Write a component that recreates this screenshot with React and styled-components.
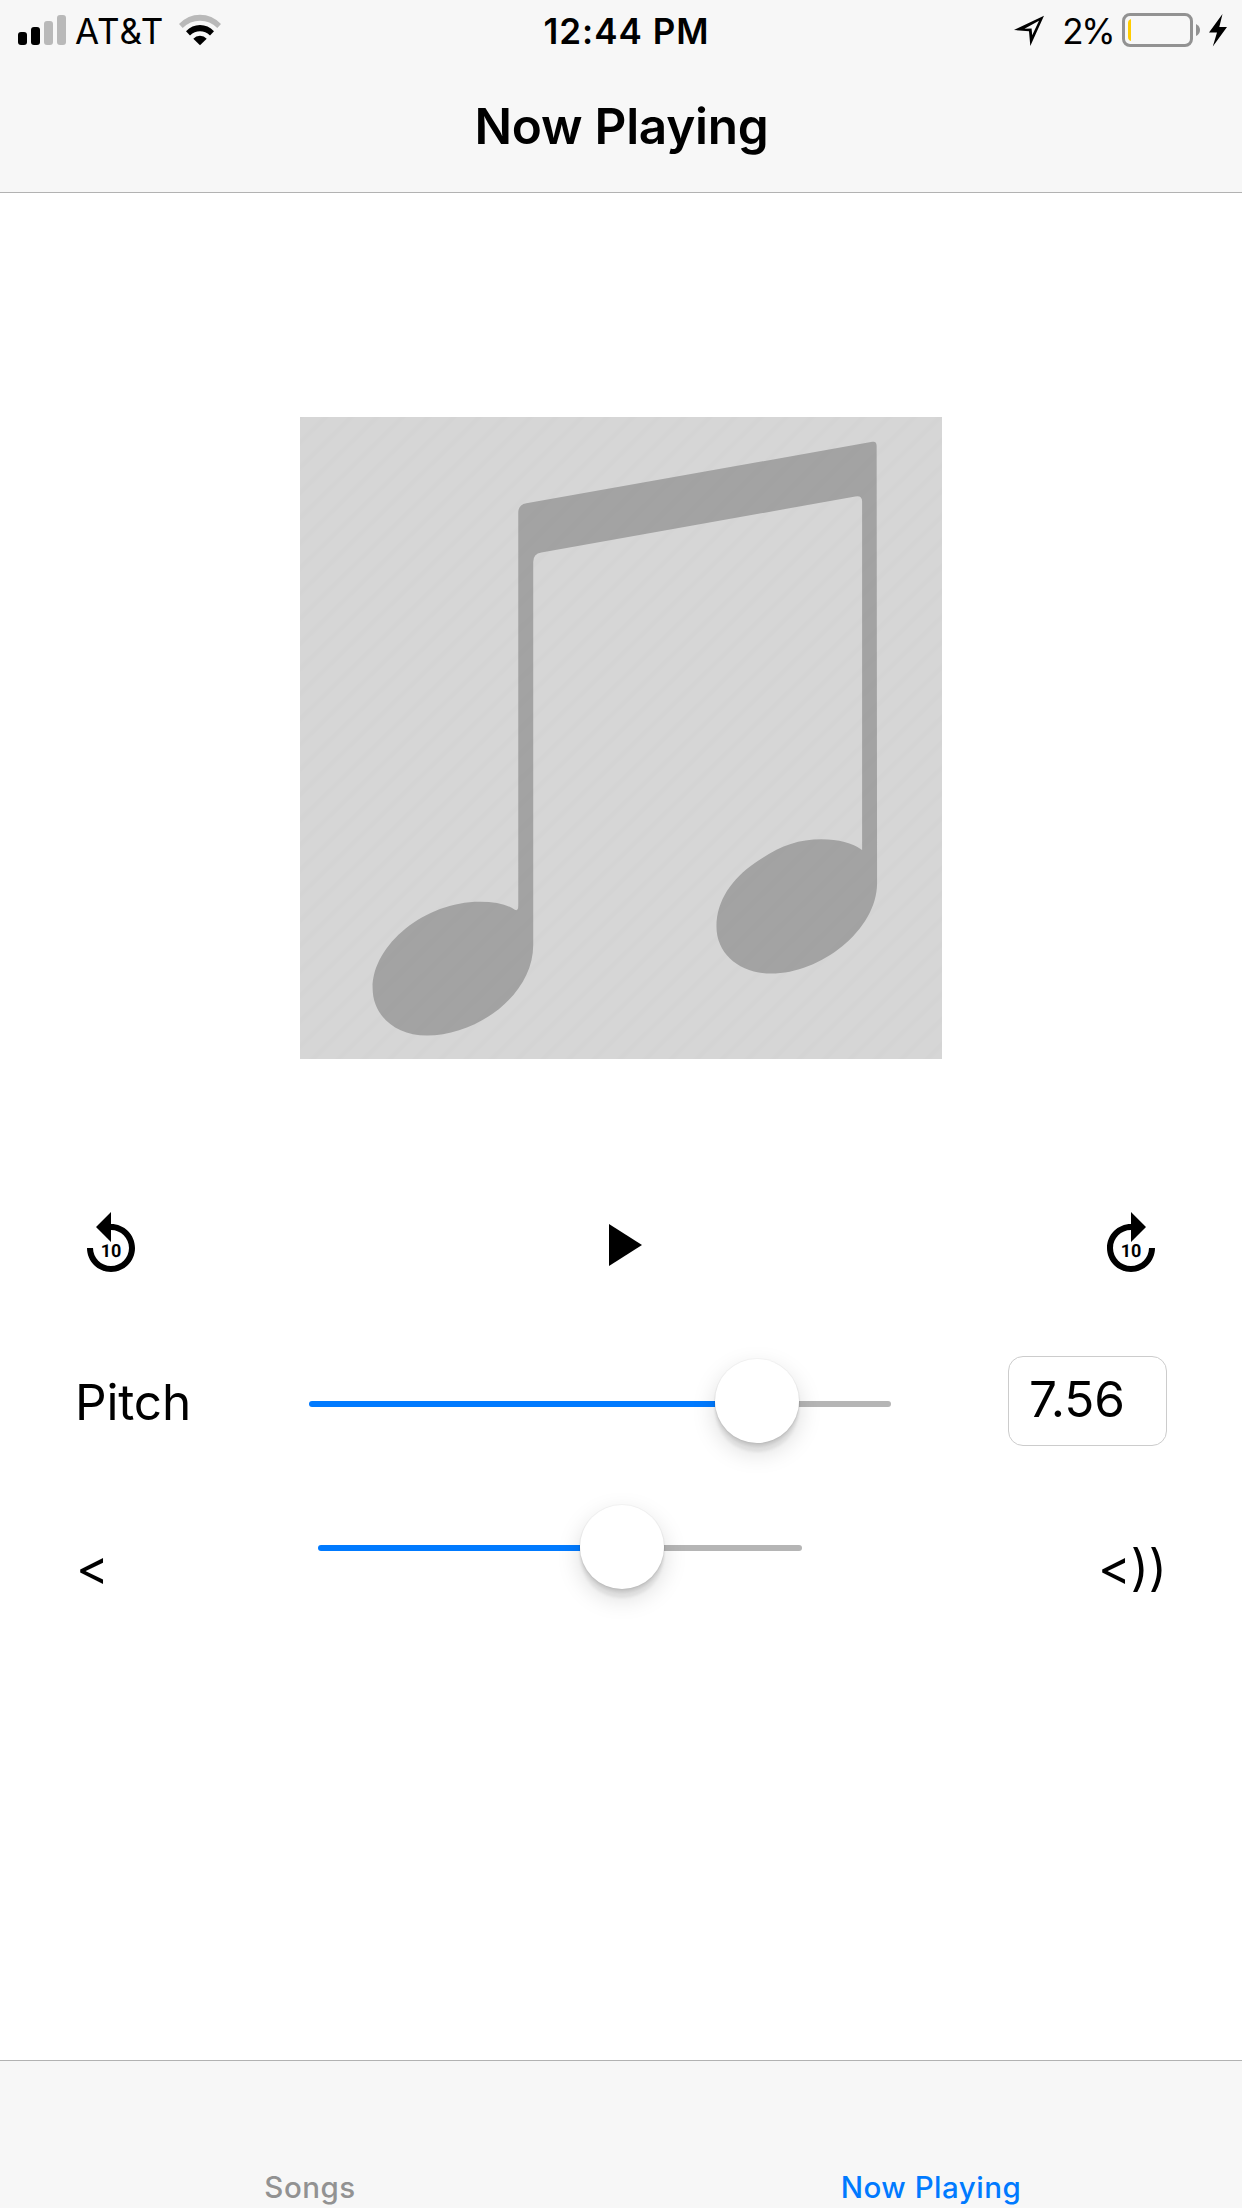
import React from 'react';
import styled, { createGlobalStyle } from 'styled-components';

const Global = createGlobalStyle`
  * { box-sizing: border-box; }
  body {
    margin: 0;
    background: #fff;
    font-family: Inter, "Liberation Sans", sans-serif;
    color: #000;
  }
`;

const Screen = styled.div`
  width: 1242px;
  height: 2208px;
  display: flex;
  flex-direction: column;
  background: #fff;
  overflow: hidden;
`;

const Header = styled.header`
  height: 193px;
  flex: none;
  background: #f7f7f7;
  border-bottom: 1px solid #b2b2b2;
`;

const StatusBar = styled.div`
  height: 60px;
  display: grid;
  grid-template-columns: 1fr auto 1fr;
  padding: 0 14px 0 18px;
`;

const StatusSide = styled.div`
  display: flex;
  align-items: flex-start;
  justify-content: ${(p) => (p.$end ? 'flex-end' : 'flex-start')};
`;

const StatusText = styled.span`
  font-size: 35px;
  line-height: 42px;
  padding-top: 10px;
  white-space: nowrap;
  font-weight: ${(p) => p.$weight || 400};
  letter-spacing: ${(p) => p.$track || 0}px;
  margin-left: ${(p) => p.$left || 0}px;
`;

const Glyph = styled.svg`
  display: block;
  flex: none;
  margin-left: ${(p) => p.$left || 0}px;
`;

const Title = styled.h1`
  margin: 0;
  height: 132px;
  padding: 36px 0 0 1px;
  text-align: center;
  font-size: 49.5px;
  line-height: 60px;
  font-weight: 600;
  letter-spacing: -0.25px;
`;

const Main = styled.main`
  flex: 1;
  display: flex;
  flex-direction: column;
`;

const Artwork = styled.svg`
  display: block;
  width: 642px;
  height: 642px;
  margin: 224px auto 0 300px;
`;

const Transport = styled.div`
  margin-top: 150px;
  padding: 0 75px;
  display: flex;
  justify-content: space-between;
`;

const IconButton = styled.button`
  width: 72px;
  height: 72px;
  padding: 0;
  border: 0;
  background: none;
  svg { display: block; }
`;

const IconLabel = styled.text`
  font-family: Roboto, sans-serif;
  font-size: 18px;
  font-weight: 700;
  text-anchor: middle;
  text-rendering: geometricPrecision;
`;

const ControlRow = styled.div`
  display: flex;
  align-items: flex-start;
  height: ${(p) => p.$height}px;
  margin-top: ${(p) => p.$top}px;
  padding: 0 75px 0 ${(p) => p.$left || 75}px;
`;

const Label = styled.span`
  flex: none;
  font-size: 49.5px;
  line-height: 60px;
  white-space: nowrap;
  width: ${(p) => p.$width}px;
  padding-top: ${(p) => p.$top}px;
  letter-spacing: ${(p) => p.$track || 0}px;
`;

const Slider = styled.div`
  flex: none;
  width: ${(p) => p.$width}px;
  height: 84px;
  margin: ${(p) => p.$top}px ${(p) => p.$right}px 0 0;
  display: flex;
  align-items: center;
`;

const Track = styled.div`
  height: 6px;
  margin-top: ${(p) => p.$drop}px;
  background: ${(p) => (p.$filled ? '#007aff' : '#b5b5b5')};
  border-radius: ${(p) => (p.$filled ? '3px 0 0 3px' : '0 3px 3px 0')};
  ${(p) => (p.$filled ? `width: ${p.$length}px;` : 'flex: 1;')}
`;

const Thumb = styled.div`
  width: 84px;
  height: 84px;
  flex: none;
  position: relative;
  border-radius: 50%;
  background: #fff;
  box-shadow: 0 0 0 1px rgba(0, 0, 0, 0.03), 0 9px 3px rgba(0, 0, 0, 0.06),
    0 9px 24px rgba(0, 0, 0, 0.15), 0 3px 3px rgba(0, 0, 0, 0.09);
`;

const Field = styled.div`
  flex: none;
  width: 159px;
  height: 90px;
  border: 1px solid #cccccc;
  border-radius: 15px;
  padding: 12px 0 0 20px;
  font-size: 49.5px;
  line-height: 60px;
  letter-spacing: -0.1px;
`;

const TabBar = styled.nav`
  height: 148px;
  flex: none;
  display: flex;
  background: #f7f7f7;
  border-top: 1px solid #b2b2b2;
`;

const Tab = styled.a`
  flex: 1;
  text-align: center;
  padding: 108px 1px 0 0;
  font-size: 29.5px;
  line-height: 36px;
  font-weight: 500;
  letter-spacing: 0.5px;
  color: ${(p) => (p.$active ? '#007aff' : '#929292')};
`;

const SignalIcon = () => (
  <Glyph width="48" height="60">
    <rect x="0" y="32" width="9" height="13" rx="3" />
    <rect x="13" y="27" width="9" height="18" rx="3" />
    <rect x="26" y="21" width="9" height="24" rx="3" fill="#b9b9b9" />
    <rect x="39" y="15" width="9" height="30" rx="3" fill="#b9b9b9" />
  </Glyph>
);

const WifiIcon = ({ left }) => (
  <Glyph width="42" height="60" $left={left}>
    <path d="M0 24 Q9 14.8 21 14.8 Q33 14.8 42 24 L38.3 28 Q31 20.7 21 20.7 Q11 20.7 3.7 28Z" fill="#b9b9b9" />
    <path d="M7 31.3 Q13 25 21 25 Q29 25 35 31.3 L31 35.4 Q26.5 31.3 21 31.3 Q15.5 31.3 11 35.4Z" />
    <path d="M14.3 38.7 Q17 35.7 21 35.7 Q25 35.7 27.7 38.7 L21 45.3Z" />
  </Glyph>
);

const LocationIcon = () => (
  <Glyph width="32" height="60">
    <path
      fillRule="evenodd"
      d="M0 30 L30 15.7 L16.3 46 L15 31.3Z M10.5 28.8 L17.6 28.4 L18.2 35.2 L25 20.7Z"
    />
  </Glyph>
);

const BatteryIcon = ({ left }) => (
  <Glyph width="80" height="60" $left={left}>
    <rect x="1.5" y="14.5" width="68" height="31" rx="6.5" fill="none" stroke="#929292" strokeWidth="3" />
    <path d="M9 19 V41 Q6 40 6 37 V23 Q6 20 9 19Z" fill="#ffcc00" />
    <path d="M74 24 Q78 26 78 30 Q78 34 74 36Z" fill="#929292" />
  </Glyph>
);

const BoltIcon = ({ left }) => (
  <Glyph width="20" height="60" $left={left}>
    <path d="M14.5 14 L1 32.5 H9 L4.8 46.5 L19 27 H11.3Z" />
  </Glyph>
);

const SkipIcon = ({ forward }) => (
  <svg width="72" height="72" viewBox="0 0 72 72">
    <path
      transform={forward ? 'matrix(-3 0 0 3 72 0)' : 'scale(3)'}
      d="M12 5V1L7 6l5 5V7c3.31 0 6 2.69 6 6s-2.69 6-6 6-6-2.69-6-6H4c0 4.42 3.58 8 8 8s8-3.58 8-8-3.58-8-8-8z"
    />
    <IconLabel x="36" y="48">10</IconLabel>
  </svg>
);

const PlayIcon = () => (
  <svg width="72" height="72" viewBox="0 0 24 24">
    <path d="M8 5v14l11-7z" />
  </svg>
);

const AlbumArt = () => (
  <Artwork viewBox="23 40 1503 1502" preserveAspectRatio="none">
    <defs>
      <pattern id="stripes" y="-18" width="42" height="42" patternUnits="userSpaceOnUse" patternTransform="rotate(-44.5)">
        <rect width="42" height="12" y="14.5" fill="#000" opacity="0.005" />
        <rect width="42" height="7" y="17" fill="#000" opacity="0.005" />
      </pattern>
    </defs>
    <rect x="23" y="40" width="1503" height="1502" fill="#d6d6d6" />
    <path
      fill="#a3a3a3"
      d="M534 262 Q535 245 553 242 L1363 98 Q1373 96 1373 108 L1374 1130 C1374 1240 1242 1342 1126 1342 C1052 1342 998 1296 998 1232 C998 1171 1035 1120 1087 1084 C1141 1046 1185 1028 1244 1028 Q1304 1028 1339 1053 V238 Q1339 223 1323 226 L588 357 Q569 360 569 379 V1275 C569 1392 438 1487 320 1487 C245 1487 193 1440 193 1376 C193 1274 316 1174 444 1174 Q500 1174 526 1193 Q534 1197 534 1183Z"
    />
    <rect x="23" y="40" width="1503" height="1502" fill="url(#stripes)" />
  </Artwork>
);

const ValueSlider = ({ width, value, drop, top, right }) => (
  <Slider $width={width} $top={top} $right={right}>
    <Track $filled $length={value} $drop={drop} />
    <Thumb />
    <Track $drop={drop} />
  </Slider>
);

export default function App() {
  return (
    <Screen>
      <Global />
      <Header>
        <StatusBar>
          <StatusSide>
            <SignalIcon />
            <StatusText $left={9} $track={0.9}>AT&amp;T</StatusText>
            <WifiIcon left={15} />
          </StatusSide>
          <StatusText $weight={600} $track={1} $left={7}>12:44 PM</StatusText>
          <StatusSide $end>
            <LocationIcon />
            <StatusText $left={16} $track={-2.5}>2%</StatusText>
            <BatteryIcon left={9} />
            <BoltIcon left={6} />
          </StatusSide>
        </StatusBar>
        <Title>Now Playing</Title>
      </Header>
      <Main>
        <AlbumArt />
        <Transport>
          <IconButton aria-label="Back 10 seconds"><SkipIcon /></IconButton>
          <IconButton aria-label="Play"><PlayIcon /></IconButton>
          <IconButton aria-label="Forward 10 seconds"><SkipIcon forward /></IconButton>
        </Transport>
        <ControlRow $top={75} $height={90}>
          <Label $width={234} $top={16} $track={-0.15}>Pitch</Label>
          <ValueSlider width={582} value={406} top={3} right={117} drop={6} />
          <Field>7.56</Field>
        </ControlRow>
        <ControlRow $top={58} $height={110} $left={76}>
          <Label $width={242} $top={33}>&lt;</Label>
          <ValueSlider width={484} value={262} top={1} right={296} drop={1} />
          <Label $width={69} $top={33}>&lt;))</Label>
        </ControlRow>
      </Main>
      <TabBar>
        <Tab>Songs</Tab>
        <Tab $active>Now Playing</Tab>
      </TabBar>
    </Screen>
  );
}
